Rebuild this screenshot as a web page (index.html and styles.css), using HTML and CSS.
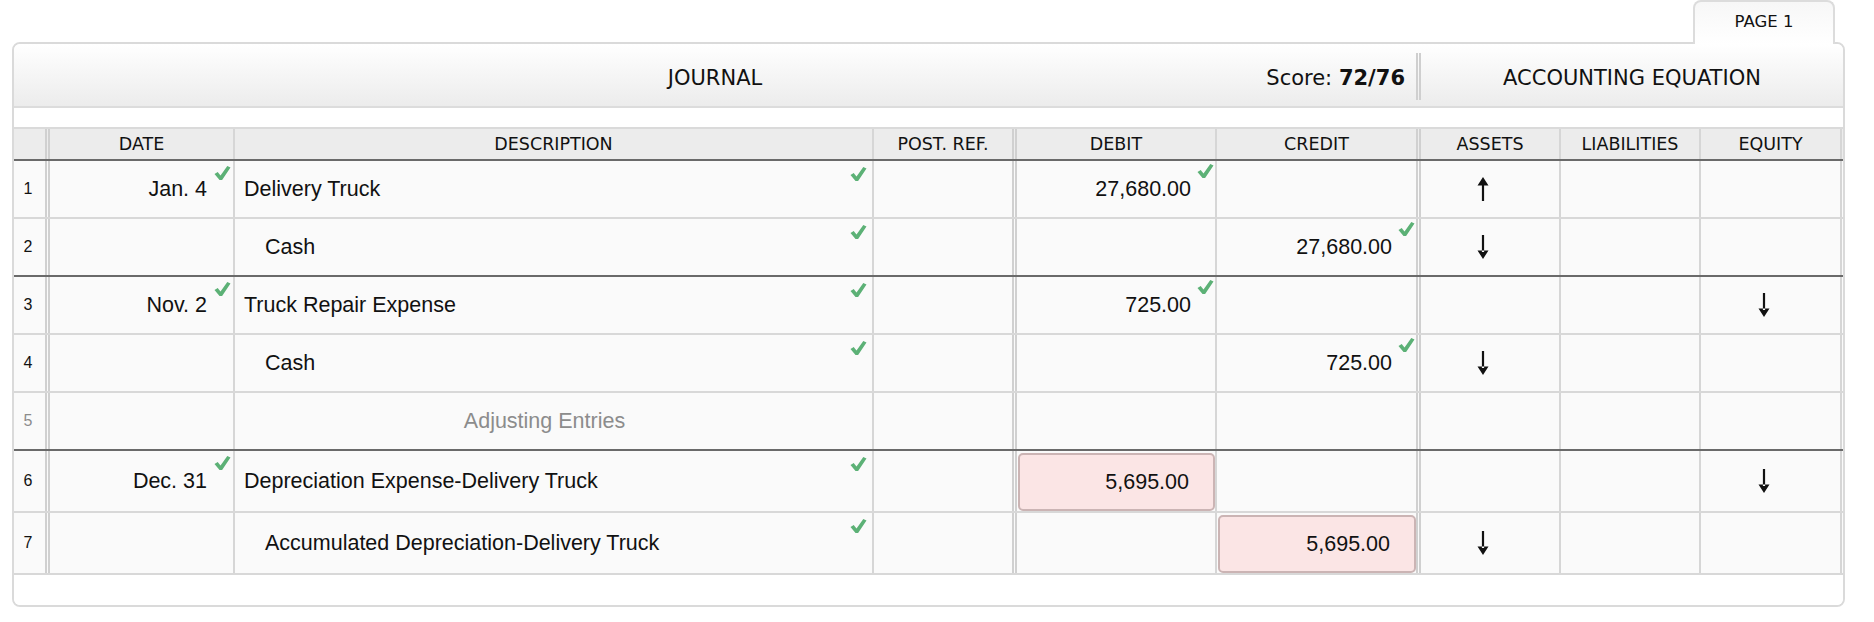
FILE: index.html
```html
<!DOCTYPE html>
<html>
<head>
<meta charset="utf-8">
<link rel="stylesheet" href="styles.css">
</head>
<body>
<div class="page">
  <div class="tabs"><div class="tab">PAGE 1</div></div>
  <div class="panel">
    <div class="head">
      <div class="head-journal">
        <span></span>
        <span class="title">JOURNAL</span>
        <span class="score">Score: <b>72/76</b></span>
      </div>
      <div class="head-sep"></div>
      <div class="head-eq">ACCOUNTING EQUATION</div>
    </div>
    <div class="spacer"></div>

    <div class="row colhead">
      <div class="c num"></div>
      <div class="c date">DATE</div>
      <div class="c desc">DESCRIPTION</div>
      <div class="c ref">POST. REF.</div>
      <div class="c amt">DEBIT</div>
      <div class="c amt dbl">CREDIT</div>
      <div class="c eq">ASSETS</div>
      <div class="c eq">LIABILITIES</div>
      <div class="c eq last">EQUITY</div>
    </div>

    <div class="row">
      <div class="c num">1</div>
      <div class="c date">Jan. 4<svg class="chk" viewBox="0 0 16 14"><path d="M0 8 L3.2 6 L6 9.4 L12.8 0 L16 1.6 L7.6 14 L5 14 Z"/></svg></div>
      <div class="c desc">Delivery Truck<svg class="chk" viewBox="0 0 16 14"><path d="M0 8 L3.2 6 L6 9.4 L12.8 0 L16 1.6 L7.6 14 L5 14 Z"/></svg></div>
      <div class="c ref"></div>
      <div class="c amt">27,680.00<svg class="chk" viewBox="0 0 16 14"><path d="M0 8 L3.2 6 L6 9.4 L12.8 0 L16 1.6 L7.6 14 L5 14 Z"/></svg></div>
      <div class="c amt dbl"></div>
      <div class="c eq"><svg class="arrow" viewBox="0 0 12 24"><path d="M4.9 7 H7.1 V24 H4.9 Z M0.5 8.5 L6 0 L11.5 8.5 Z"/></svg></div>
      <div class="c eq"></div>
      <div class="c eq last"></div>
    </div>

    <div class="row dark">
      <div class="c num">2</div>
      <div class="c date"></div>
      <div class="c desc indent">Cash<svg class="chk" viewBox="0 0 16 14"><path d="M0 8 L3.2 6 L6 9.4 L12.8 0 L16 1.6 L7.6 14 L5 14 Z"/></svg></div>
      <div class="c ref"></div>
      <div class="c amt"></div>
      <div class="c amt dbl">27,680.00<svg class="chk" viewBox="0 0 16 14"><path d="M0 8 L3.2 6 L6 9.4 L12.8 0 L16 1.6 L7.6 14 L5 14 Z"/></svg></div>
      <div class="c eq"><svg class="arrow" viewBox="0 0 12 24"><path d="M4.9 0 H7.1 V17 H4.9 Z M0.5 15.5 L6 24 L11.5 15.5 Z"/></svg></div>
      <div class="c eq"></div>
      <div class="c eq last"></div>
    </div>

    <div class="row">
      <div class="c num">3</div>
      <div class="c date">Nov. 2<svg class="chk" viewBox="0 0 16 14"><path d="M0 8 L3.2 6 L6 9.4 L12.8 0 L16 1.6 L7.6 14 L5 14 Z"/></svg></div>
      <div class="c desc">Truck Repair Expense<svg class="chk" viewBox="0 0 16 14"><path d="M0 8 L3.2 6 L6 9.4 L12.8 0 L16 1.6 L7.6 14 L5 14 Z"/></svg></div>
      <div class="c ref"></div>
      <div class="c amt">725.00<svg class="chk" viewBox="0 0 16 14"><path d="M0 8 L3.2 6 L6 9.4 L12.8 0 L16 1.6 L7.6 14 L5 14 Z"/></svg></div>
      <div class="c amt dbl"></div>
      <div class="c eq"></div>
      <div class="c eq"></div>
      <div class="c eq last"><svg class="arrow" viewBox="0 0 12 24"><path d="M4.9 0 H7.1 V17 H4.9 Z M0.5 15.5 L6 24 L11.5 15.5 Z"/></svg></div>
    </div>

    <div class="row">
      <div class="c num">4</div>
      <div class="c date"></div>
      <div class="c desc indent">Cash<svg class="chk" viewBox="0 0 16 14"><path d="M0 8 L3.2 6 L6 9.4 L12.8 0 L16 1.6 L7.6 14 L5 14 Z"/></svg></div>
      <div class="c ref"></div>
      <div class="c amt"></div>
      <div class="c amt dbl">725.00<svg class="chk" viewBox="0 0 16 14"><path d="M0 8 L3.2 6 L6 9.4 L12.8 0 L16 1.6 L7.6 14 L5 14 Z"/></svg></div>
      <div class="c eq"><svg class="arrow" viewBox="0 0 12 24"><path d="M4.9 0 H7.1 V17 H4.9 Z M0.5 15.5 L6 24 L11.5 15.5 Z"/></svg></div>
      <div class="c eq"></div>
      <div class="c eq last"></div>
    </div>

    <div class="row dark">
      <div class="c num muted">5</div>
      <div class="c date"></div>
      <div class="c desc center muted">Adjusting Entries</div>
      <div class="c ref"></div>
      <div class="c amt"></div>
      <div class="c amt dbl"></div>
      <div class="c eq"></div>
      <div class="c eq"></div>
      <div class="c eq last"></div>
    </div>

    <div class="row tall">
      <div class="c num">6</div>
      <div class="c date">Dec. 31<svg class="chk" viewBox="0 0 16 14"><path d="M0 8 L3.2 6 L6 9.4 L12.8 0 L16 1.6 L7.6 14 L5 14 Z"/></svg></div>
      <div class="c desc">Depreciation Expense-Delivery Truck<svg class="chk" viewBox="0 0 16 14"><path d="M0 8 L3.2 6 L6 9.4 L12.8 0 L16 1.6 L7.6 14 L5 14 Z"/></svg></div>
      <div class="c ref"></div>
      <div class="c amt boxed"><div class="wrong">5,695.00</div></div>
      <div class="c amt dbl"></div>
      <div class="c eq"></div>
      <div class="c eq"></div>
      <div class="c eq last"><svg class="arrow" viewBox="0 0 12 24"><path d="M4.9 0 H7.1 V17 H4.9 Z M0.5 15.5 L6 24 L11.5 15.5 Z"/></svg></div>
    </div>

    <div class="row tall">
      <div class="c num">7</div>
      <div class="c date"></div>
      <div class="c desc indent">Accumulated Depreciation-Delivery Truck<svg class="chk" viewBox="0 0 16 14"><path d="M0 8 L3.2 6 L6 9.4 L12.8 0 L16 1.6 L7.6 14 L5 14 Z"/></svg></div>
      <div class="c ref"></div>
      <div class="c amt"></div>
      <div class="c amt dbl boxed"><div class="wrong">5,695.00</div></div>
      <div class="c eq"><svg class="arrow" viewBox="0 0 12 24"><path d="M4.9 0 H7.1 V17 H4.9 Z M0.5 15.5 L6 24 L11.5 15.5 Z"/></svg></div>
      <div class="c eq"></div>
      <div class="c eq last"></div>
    </div>

    <div class="foot"></div>
  </div>
</div>
</body>
</html>
```

FILE: styles.css
```css
* { box-sizing: border-box; }

html, body {
  margin: 0;
  padding: 0;
  background: #ffffff;
}

body {
  font-family: "DejaVu Sans", "Liberation Sans", sans-serif;
  color: #111;
}

.page {
  width: 1874px;
  padding-left: 12px;
}

.tabs {
  display: flex;
  justify-content: flex-end;
  width: 1833px;
  padding-right: 10px;
  position: relative;
  z-index: 2;
}

.tab {
  width: 142px;
  height: 44px;
  margin-bottom: -2px;
  border: 2px solid #dcdcdc;
  border-bottom: none;
  border-radius: 8px 8px 0 0;
  background: linear-gradient(#f7f7f7, #ffffff);
  font-size: 16.5px;
  display: flex;
  align-items: center;
  justify-content: center;
  padding-bottom: 4px;
  color: #111;
}

.panel {
  width: 1833px;
  border: 2px solid #dadada;
  border-radius: 8px;
  background: #ffffff;
  overflow: hidden;
}

.head {
  display: grid;
  grid-template-columns: 1402px 5px 422px;
  height: 64px;
  border-bottom: 2px solid #dcdcdc;
  background: linear-gradient(#ffffff, #ececec);
  font-size: 21px;
}

.head-journal {
  display: grid;
  grid-template-columns: 1fr auto 1fr;
  align-items: center;
  padding-top: 6px;
}

.score {
  justify-self: end;
  padding-right: 11px;
}

.score b { font-weight: bold; }

.head-sep {
  margin: 9px 0 6px;
  border-left: 5px double #cfcfcf;
}

.head-eq {
  display: flex;
  align-items: center;
  justify-content: center;
  padding-top: 6px;
}

.spacer {
  height: 21px;
  border-bottom: 2px solid #dadada;
  background: #ffffff;
}

.row {
  display: grid;
  grid-template-columns: 36px 185px 639px 143px 200px 204px 140px 140px 142px;
  height: 58px;
  border-bottom: 2px solid #d8d8d8;
  background: #fafafa;
  font-family: "Liberation Sans", Arial, sans-serif;
  font-size: 21.5px;
}

.row.tall { height: 62px; }
.row.dark { border-bottom-color: #6a6a6a; }

.row.colhead {
  height: 32px;
  background: #ececec;
  border-bottom: 2px solid #6a6a6a;
  font-family: "DejaVu Sans", sans-serif;
  font-size: 17.5px;
}

.c {
  position: relative;
  display: flex;
  align-items: center;
  border-right: 2px solid #d6d6d6;
  min-width: 0;
  white-space: nowrap;
}

.num {
  border-right: 5px double #d0d0d0;
  justify-content: center;
  padding-right: 3px;
  font-size: 16px;
}

.date {
  justify-content: flex-end;
  padding-right: 26px;
}

.desc { padding-left: 9px; }
.desc.indent { padding-left: 30px; }
.desc.center { justify-content: center; padding-left: 0; padding-right: 18px; }

.ref { border-right: 5px double #d0d0d0; }

.amt {
  justify-content: flex-end;
  padding-right: 24px;
}

.amt.dbl { border-right: 5px double #d0d0d0; }

.eq {
  justify-content: center;
  padding-right: 14px;
}

.eq.last { width: 141px; }

.colhead .c {
  justify-content: center;
  padding: 0;
}

.muted { color: #8c8c8c; }

.chk {
  position: absolute;
  top: 5px;
  right: 2px;
  width: 17px;
  height: 14px;
  fill: #5cb176;
}

.desc .chk { right: 5px; top: 6px; }
.amt .chk { right: 1px; top: 3px; }

.arrow {
  width: 12px;
  height: 24px;
  fill: #111;
}

.boxed {
  padding: 2px 0 0 1px;
  align-items: stretch;
}

.wrong {
  flex: 1;
  display: flex;
  align-items: center;
  justify-content: flex-end;
  padding-right: 24px;
  background: #fbe5e5;
  border: 2px solid #cbb4b4;
  border-radius: 5px;
}

.foot {
  height: 30px;
  background: #ffffff;
}
```
